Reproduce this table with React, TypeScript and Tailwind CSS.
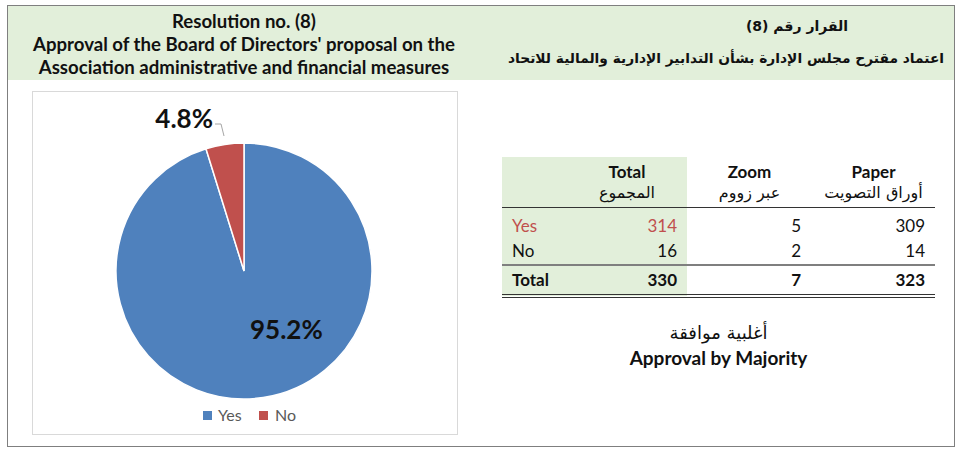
import React from "react";

const CX = 211;
const CY = 179;
const R = 128;

// point on the circle, angle in degrees clockwise from 12 o'clock
function pt(deg: number) {
  const a = (deg * Math.PI) / 180;
  return [CX + R * Math.sin(a), CY - R * Math.cos(a)];
}

function VotePie() {
  const noDeg = 360 * 0.048;
  const [sx, sy] = pt(-noDeg);
  const [tx, ty] = pt(0);
  return (
    <svg width="424" height="342" viewBox="0 0 424 342">
      <path
        d={`M${CX} ${CY} L${tx} ${ty} A${R} ${R} 0 1 1 ${sx} ${sy} Z`}
        fill="#4f81bd"
        stroke="#fff"
        strokeWidth="1.5"
      />
      <path
        d={`M${CX} ${CY} L${sx} ${sy} A${R} ${R} 0 0 1 ${tx} ${ty} Z`}
        fill="#c0504d"
        stroke="#fff"
        strokeWidth="1.5"
      />
      <polyline
        points="182,32 188,32 191,44"
        fill="none"
        stroke="#a6a6a6"
        strokeWidth="1"
      />
      <text
        x="180"
        y="36"
        textAnchor="end"
        fontFamily="Lato, sans-serif"
        fontWeight="700"
        fontSize="26"
        fill="#111"
      >
        4.8%
      </text>
      <text
        x="217"
        y="247"
        fontFamily="Lato, sans-serif"
        fontWeight="700"
        fontSize="26"
        fill="#111"
      >
        95.2%
      </text>
      {/* legend */}
      <rect x="170" y="319" width="9" height="9" fill="#4f81bd" />
      <text x="185" y="329" fontFamily="Lato, sans-serif" fontSize="16" fill="#595959">
        Yes
      </text>
      <rect x="226" y="319" width="9" height="9" fill="#c0504d" />
      <text x="242" y="329" fontFamily="Lato, sans-serif" fontSize="16" fill="#595959">
        No
      </text>
    </svg>
  );
}

const ar = "font-['DejaVu_Sans',sans-serif]";

function VotesTable() {
  return (
    <table className="w-[433px] table-fixed border-collapse text-[17px] text-[#111]">
      <colgroup>
        <col className="w-[61px]" />
        <col className="w-[124px]" />
        <col className="w-[125px]" />
        <col className="w-[123px]" />
      </colgroup>
      <thead>
        <tr className="h-[50px] border-b border-[#333]">
          <th className="bg-[#e2efda]" />
          <th className="bg-[#e2efda] pl-[4px] text-center align-top pt-[4px] leading-[21px]">
            <div className="font-bold">Total</div>
            <div className={`${ar} font-normal text-[16px]`} dir="rtl">
              المجموع
            </div>
          </th>
          <th className="text-center align-top pt-[4px] leading-[21px]">
            <div className="font-bold">Zoom</div>
            <div className={`${ar} font-normal text-[16px]`} dir="rtl">
              عبر زووم
            </div>
          </th>
          <th className="text-center align-top pt-[4px] leading-[21px]">
            <div className="font-bold">Paper</div>
            <div className={`${ar} font-normal text-[16px]`} dir="rtl">
              أوراق التصويت
            </div>
          </th>
        </tr>
      </thead>
      <tbody>
        <tr className="h-[31px] align-bottom text-[#c0504d]">
          <td className="bg-[#e2efda] pl-[10px]">Yes</td>
          <td className="bg-[#e2efda] pr-[10px] text-right">314</td>
          <td className="pr-[11px] text-right text-[#111]">5</td>
          <td className="pr-[10px] text-right text-[#111]">309</td>
        </tr>
        <tr className="h-[25px] border-b-2 border-[#7f7f7f]">
          <td className="bg-[#e2efda] pl-[10px]">No</td>
          <td className="bg-[#e2efda] pr-[10px] text-right">16</td>
          <td className="pr-[11px] text-right">2</td>
          <td className="pr-[10px] text-right">14</td>
        </tr>
        <tr className="h-[31px] font-bold border-b-[4px] border-double border-[#333]">
          <td className="bg-[#e2efda] pl-[10px]">Total</td>
          <td className="bg-[#e2efda] pr-[10px] text-right">330</td>
          <td className="pr-[11px] text-right">7</td>
          <td className="pr-[10px] text-right">323</td>
        </tr>
      </tbody>
    </table>
  );
}

export default function App() {
  return (
    <div className="w-[960px] h-[454px] bg-white pl-[7px] pt-[5px] font-['Lato',sans-serif] text-[#111]">
      <div className="w-[948px] h-[442px] border border-[#7f7f7f] flex flex-col">
        {/* Header band */}
        <div className="h-[74px] bg-[#e2efda] grid grid-cols-[472px_1fr]">
          <div className="pt-[4px] text-center font-bold text-[18.6px] leading-[23px] whitespace-nowrap">
            <div>Resolution no. (8)</div>
            <div>Approval of the Board of Directors' proposal on the</div>
            <div>Association administrative and financial measures</div>
          </div>
          <div dir="rtl" className={`${ar} font-bold text-[13.8px] text-center whitespace-nowrap`}>
            <div className="pt-[8px] pl-[160px] leading-[24px] text-[14px]">القرار رقم (8)</div>
            <div className="pt-[8px] pl-[18px] leading-[24px]">
              اعتماد مقترح مجلس الإدارة بشأن التدابير الإدارية والمالية للاتحاد
            </div>
          </div>
        </div>

        {/* Body */}
        <div className="flex-1 grid grid-cols-[472px_1fr]">
          <div className="pl-[24px] pt-[11px]">
            <div className="w-[426px] h-[344px] border border-[#d9d9d9]">
              <VotePie />
            </div>
          </div>
          <div className="pl-[22px] pt-[77px]">
            <VotesTable />
            <div className="w-[433px] mt-[22px] text-center">
              <div dir="rtl" className={`${ar} text-[18px] leading-[25px]`}>
                أغلبية موافقة
              </div>
              <div className="font-bold text-[19px] leading-[25px]">Approval by Majority</div>
            </div>
          </div>
        </div>
      </div>
    </div>
  );
}
